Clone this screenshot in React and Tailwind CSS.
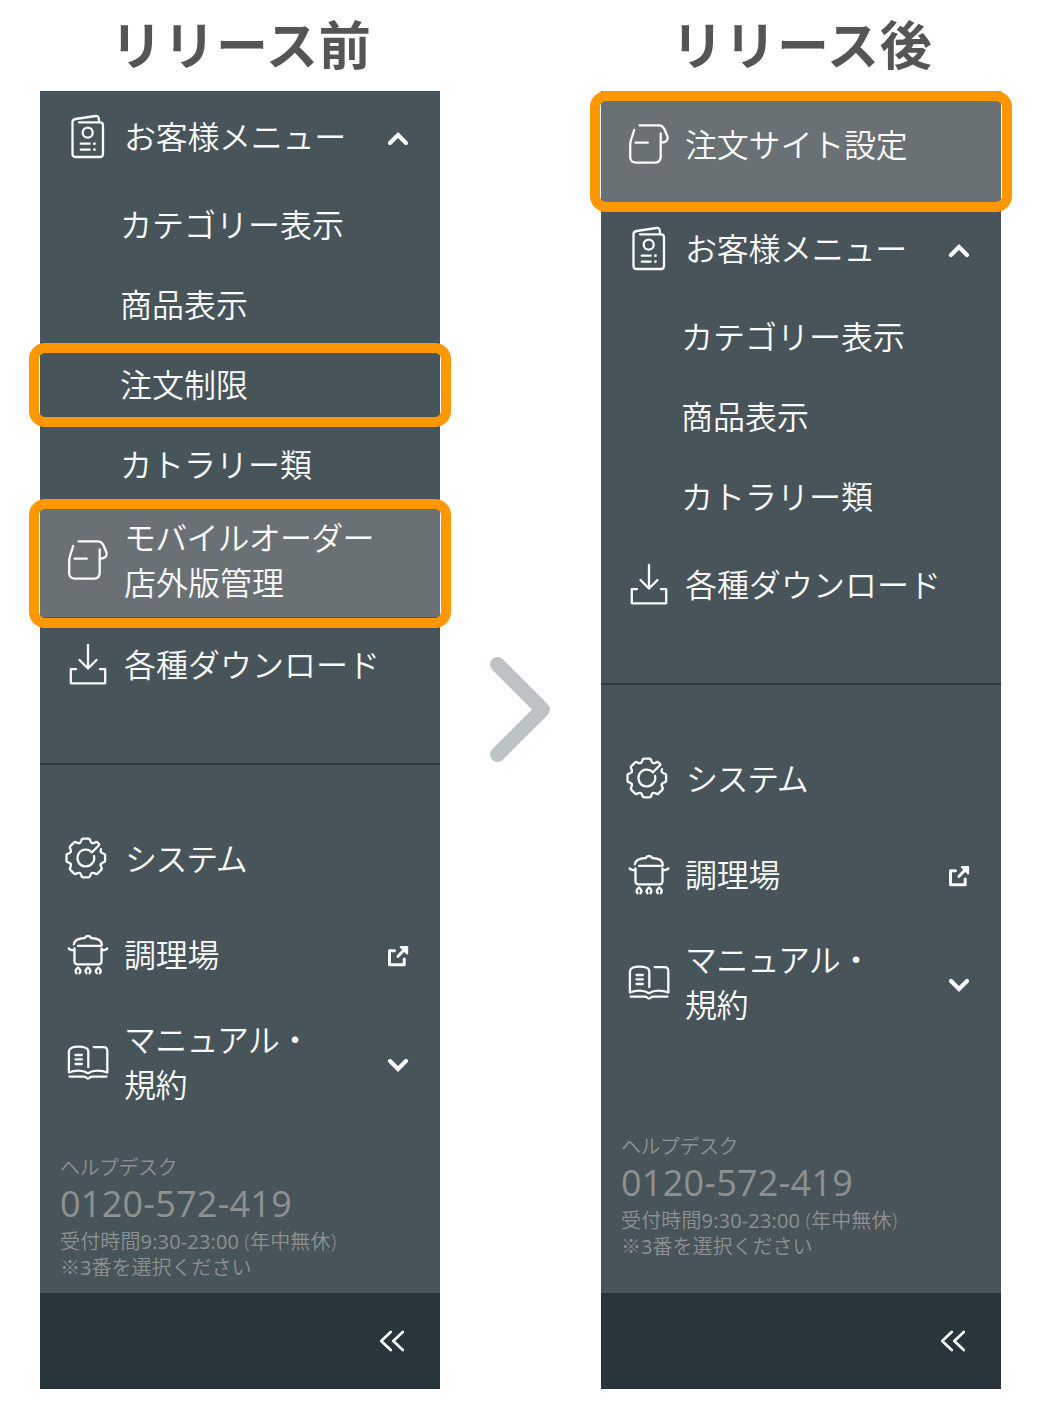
import React from 'react';

const Icon = ({ children }) => (
    <svg
        viewBox="0 0 48 48"
        className="w-12 h-12 shrink-0"
        fill="none"
        stroke="currentColor"
        strokeWidth="2.300"
        strokeLinecap="round"
        strokeLinejoin="round"
    >
        {children}
    </svg>
);

const MenuIcon = () => (
    <Icon>
        <path d="M15 9.3H36Q39 9.3 39 12.3V41Q39 44 36 44H11.500Q8.500 44 8.500 41V9.500Q8.500 6.500 11.500 6L31.500 3Q34.300 2.600 34.700 5.500L35.200 8.800" />
        <circle cx="23.700" cy="19.700" r="5" />
        <path d="M16.700 30.700H25.700M16.700 36.600H25.700" />
        <path d="M30.400 30.700H30.500M30.400 36.600H30.500" strokeWidth="2.800" />
    </Icon>
);

const BagIcon = () => (
    <Icon>
        <path d="M14.500 4.300H33.500Q37.500 4.300 39.300 8L42.500 15.500Q43.800 21.300 36.200 21.500" />
        <path d="M35.700 12.500V36.300Q35.200 41.600 29.500 41.700H11Q5.500 41.500 5.200 36.500V24Q5.200 22 6 19L9.200 8.900" />
        <path d="M10.500 21.700H22.800" />
    </Icon>
);

const DownloadIcon = () => (
    <Icon>
        <path d="M24 4V27.500M15.500 19L24 27.500L32.500 19" />
        <path d="M12 28.200H6.800V42.300H41.200V28.200H36" />
    </Icon>
);

const TOOTH = 'M-6.2 -15Q-5 -15.600 -4.600 -17Q-4.200 -19.300 -2.500 -19.300H2.500Q4.200 -19.300 4.600 -17Q5 -15.600 6.200 -15';

const GearIcon = () => (
    <Icon>
        <g transform="translate(21.8 23)">
            {[0, 90, 135, 180, 225, 270, 315].map((angle) => (
                <path key={angle} d={TOOTH} transform={`rotate(${angle})`} />
            ))}
            {/* the broken tooth that runs into the inner ring */}
            <path
                d="M-6.200 -15Q-5 -15.600 -4.600 -17Q-4.200 -19.300 -2.500 -19.300H-0.500Q0.300 -19.300 0.300 -18V-8.400M6.200 -15Q5 -15.600 4.500 -17"
                transform="rotate(45)"
            />
            <path d="M6.100 -5.800A8.400 8.400 0 1 0 8.200 -2" />
        </g>
    </Icon>
);

const PotIcon = () => (
    <Icon>
        <path d="M9.800 13.300C10.200 9.500 15 7.300 20.800 7C21.400 5.600 22.500 5 24 5S26.600 5.600 27.200 7C33 7.300 37.500 9.500 37.900 13.300Q37.900 14.900 36.500 14.900H14" />
        <path d="M4.700 17.500Q6 19.200 10.300 19.200M43.300 17.500Q42 19.200 37.700 19.200" />
        <path d="M10.500 17.500V30.300Q10.500 33.300 13.500 33.300H34.500Q37.500 33.300 37.500 30.300V17.500" />
        {[14, 24, 34.3].map((x) => (
            <path
                key={x}
                d="M-1.500 6.800Q-3.400 4.500 -1.500 2.500L0 1L1.500 2.500Q3.400 4.500 1.500 6.800"
                transform={`translate(${x} 35.500)`}
            />
        ))}
    </Icon>
);

const BookIcon = () => (
    <Icon>
        <path d="M24.300 28.200V11.500Q23 7.700 14.500 7.700T4.900 12V33.500Q9 31.700 14.500 31.700T24 34.200Q28 31.700 33.500 31.700T43.300 33.500V12Q43.300 8.100 39.500 8.100H29.700" />
        <path d="M5.500 37.600H19.500Q21.500 37.600 22.300 38.600T24 39.600T25.700 38.600T28.500 37.600H42.500" />
        <path d="M11.500 16H17.800M11.500 20.400H17.800M11.500 25H17.800" />
    </Icon>
);

const Mark = ({ children, strokeWidth }) => (
    <svg
        viewBox="0 0 24 24"
        className="w-6 h-6 shrink-0 ml-auto"
        fill="none"
        stroke="currentColor"
        strokeWidth={strokeWidth}
        strokeLinecap="round"
        strokeLinejoin="round"
    >
        {children}
    </svg>
);

const ChevronUp = () => <Mark strokeWidth="4.200"><path d="M4 18L12 10L20 18" strokeLinejoin="miter" /></Mark>;
const ChevronDown = () => <Mark strokeWidth="4.200"><path d="M4 10L12 18L20 10" strokeLinejoin="miter" /></Mark>;
const External = () => (
    <Mark strokeWidth="3">
        <path d="M8.500 7.700H3.500V21.800H18.200V16" />
        <path d="M12 13.300L19 6" />
        <path d="M14.800 4H21.200V10.500Z" fill="currentColor" strokeWidth="2" />
    </Mark>
);

const Highlight = ({ className }) => (
    <div className={`absolute z-10 -left-[11px] -right-[11px] border-[10px] border-[#ff9800] rounded-2xl ${className}`} />
);

const Item = ({ icon, mark, className = 'h-24', textClass = '', children }) => (
    <div className={`relative flex items-center gap-3 pl-6 pr-[30px] shrink-0 ${className}`}>
        {icon}
        <div className={`whitespace-nowrap pb-0.5 ${textClass}`}>{children}</div>
        {mark}
    </div>
);

const SubItem = ({ highlighted, children }) => (
    <div className="relative flex items-center h-20 pl-20 pb-0.5 shrink-0">
        {children}
        {highlighted && <Highlight className="-inset-y-[2px]" />}
    </div>
);

const Sidebar = ({ released }) => (
    <div className="flex flex-col w-[400px] h-[1298px] bg-[#475459] text-[#fafafa] text-[32px] leading-[45px] font-[350]">
        {released && (
            <div className="relative bg-[#697174]">
                <Item icon={<BagIcon />} className="h-28 pb-1" textClass="tracking-[-0.2px]">注文サイト設定</Item>
                <Highlight className="top-0 -bottom-[9px]" />
            </div>
        )}
        <Item icon={<MenuIcon />} mark={<ChevronUp />} className="h-[92px]" textClass="tracking-[-0.3px]">お客様メニュー</Item>
        <div className="flex flex-col pt-0.5">
            <SubItem>カテゴリー表示</SubItem>
            <SubItem>商品表示</SubItem>
            {!released && <SubItem highlighted>注文制限</SubItem>}
            <SubItem>カトラリー類</SubItem>
        </div>
        {!released && (
            <div className="relative bg-[#697174]">
                <Item icon={<BagIcon />} className="h-28">
                    <span className="tracking-[-0.8px]">モバイルオーダー</span><br />店外版管理
                </Item>
                <Highlight className="-top-[6px] -bottom-[11px]" />
            </div>
        )}
        <Item icon={<DownloadIcon />}>各種ダウンロード</Item>
        <div className="mt-[50px] mb-[46px] h-0.5 shrink-0 bg-[#2d3a3f]" />
        <Item icon={<GearIcon />} textClass="pl-px tracking-[-1.4px]">システム</Item>
        <Item icon={<PotIcon />} mark={<External />} textClass="tracking-[-0.3px]">調理場</Item>
        <Item icon={<BookIcon />} mark={<ChevronDown />} className="h-[119px]">
            <span className="tracking-[-0.8px]">マニュアル・</span><br />
            <span className="tracking-[-0.5px]">規約</span>
        </Item>
        <div className={`mt-auto pl-5 text-[#8f9191] text-[20px] leading-[26px] whitespace-nowrap ${released ? 'pb-[33px]' : 'pb-3'}`}>
            <p className="pt-px tracking-[-0.5px]">ヘルプデスク</p>
            <p className="text-[36px] leading-[48px] -mt-px mb-px tracking-[0.25px] font-normal">0120-572-419</p>
            <p className="tracking-[0.15px]">受付時間<span className="font-normal">9:30-23:00</span> (年中無休)</p>
            <p>※<span className="font-normal">3</span>番を選択ください</p>
        </div>
        <div className="flex items-center h-24 shrink-0 bg-[#28353a] pr-9">
            <svg viewBox="0 0 24 24" className="w-6 h-6 ml-auto" fill="none" stroke="currentColor" strokeWidth="2.700" strokeLinecap="round" strokeLinejoin="round">
                <path d="M10.700 3L1.200 12L10.700 21M22.800 3L13.300 12L22.800 21" />
            </svg>
        </div>
    </div>
);

const Column = ({ title, released }) => (
    <div className="flex flex-col w-[400px]">
        <h1 className="h-[91px] pt-[15px] pl-0.5 text-center text-[52px] leading-[60px] tracking-[0.7px] font-bold text-[#555] whitespace-nowrap">{title}</h1>
        <Sidebar released={released} />
    </div>
);

export default function App() {
    return (
        <div className="flex w-[1040px] h-[1420px] pl-10 bg-white overflow-hidden font-['Open_Sans','Noto_Sans_CJK_JP',sans-serif]">
            <Column title="リリース前" />
            <div className="w-[161px] flex justify-center pr-px">
                <svg viewBox="0 0 64 110" className="w-16 h-[110px] mt-[654px]" fill="none" stroke="#bdc3c5" strokeWidth="15" strokeLinecap="round" strokeLinejoin="round">
                    <path d="M9.500 10.500L54.500 55.500L9.500 100.500" />
                </svg>
            </div>
            <Column title="リリース後" released />
        </div>
    );
}
